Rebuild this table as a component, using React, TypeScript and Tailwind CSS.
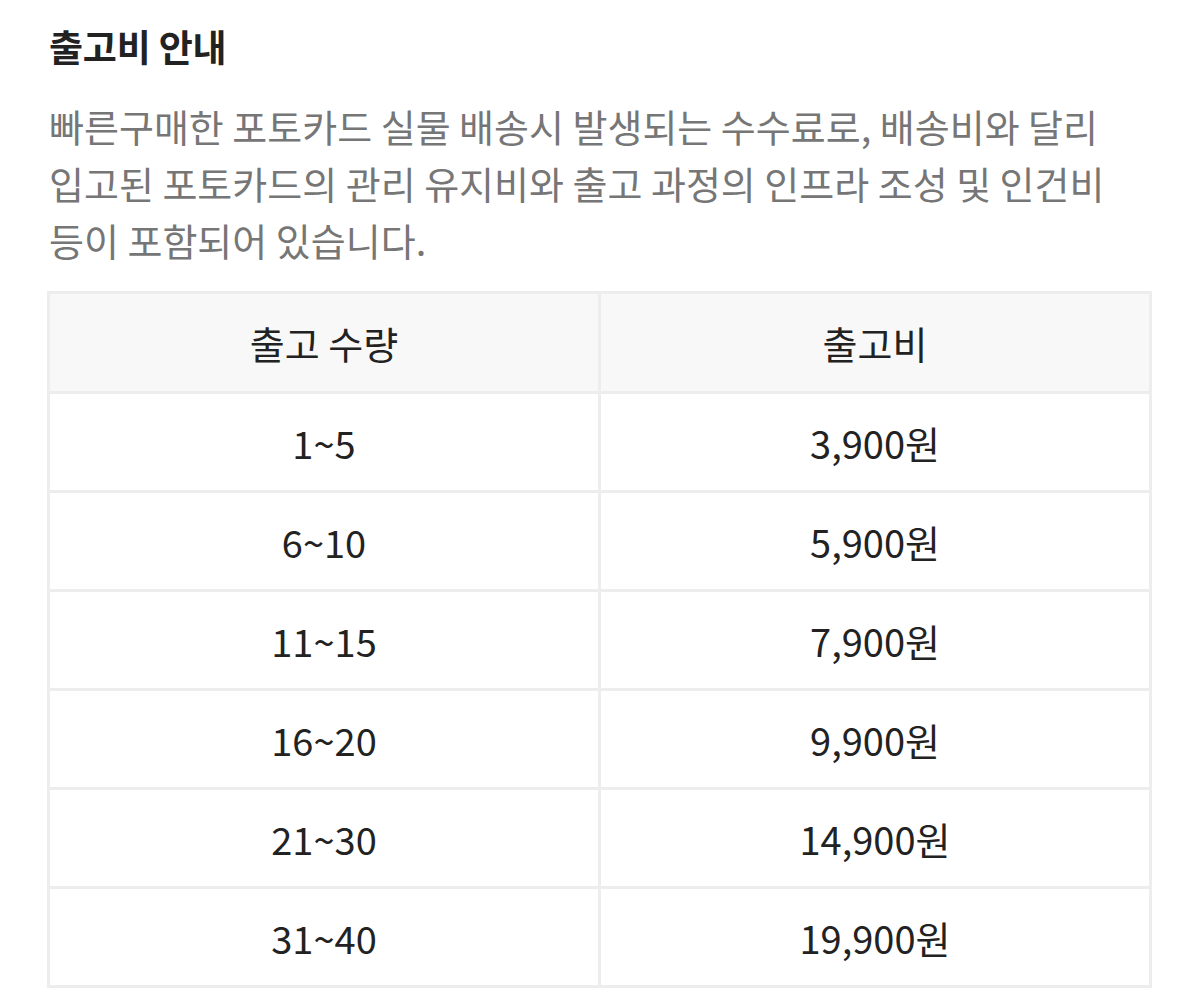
import React from "react";

const rows: [string, string][] = [
  ["1~5", "3,900원"],
  ["6~10", "5,900원"],
  ["11~15", "7,900원"],
  ["16~20", "9,900원"],
  ["21~30", "14,900원"],
  ["31~40", "19,900원"],
];

export default function App() {
  return (
    <div
      className="w-[1200px] h-[994px] bg-white overflow-hidden pl-[47px] pt-[20px]"
      style={{ fontFamily: '"Noto Sans CJK KR", "Noto Sans", sans-serif' }}
    >
      <h1 className="text-[37px] leading-[52px] font-bold text-[#222222] pl-[2px] tracking-[-0.2px]">
        출고비 안내
      </h1>
      <p className="mt-[25px] text-[38px] leading-[57px] text-[#767676] pl-[2px] w-[1140px]">
        빠른구매한 포토카드 실물 배송시 발생되는 수수료로, 배송비와 달리
        <br />
        입고된 포토카드의 관리 유지비와 출고 과정의 인프라 조성 및 인건비
        <br />
        등이 포함되어 있습니다.
      </p>
      <div className="mt-[23px] w-[1105px] grid grid-cols-2 gap-[3px] p-[3px] bg-[#ededed] text-[38px] text-[#222222]">
        <div className="h-[97px] bg-[#f8f8f8] flex items-center justify-center">출고 수량</div>
        <div className="h-[97px] bg-[#f8f8f8] flex items-center justify-center">출고비</div>
        {rows.map(([q, f]) => (
          <React.Fragment key={q}>
            <div className="h-[96px] bg-white flex items-center justify-center">{q}</div>
            <div className="h-[96px] bg-white flex items-center justify-center">{f}</div>
          </React.Fragment>
        ))}
      </div>
    </div>
  );
}
